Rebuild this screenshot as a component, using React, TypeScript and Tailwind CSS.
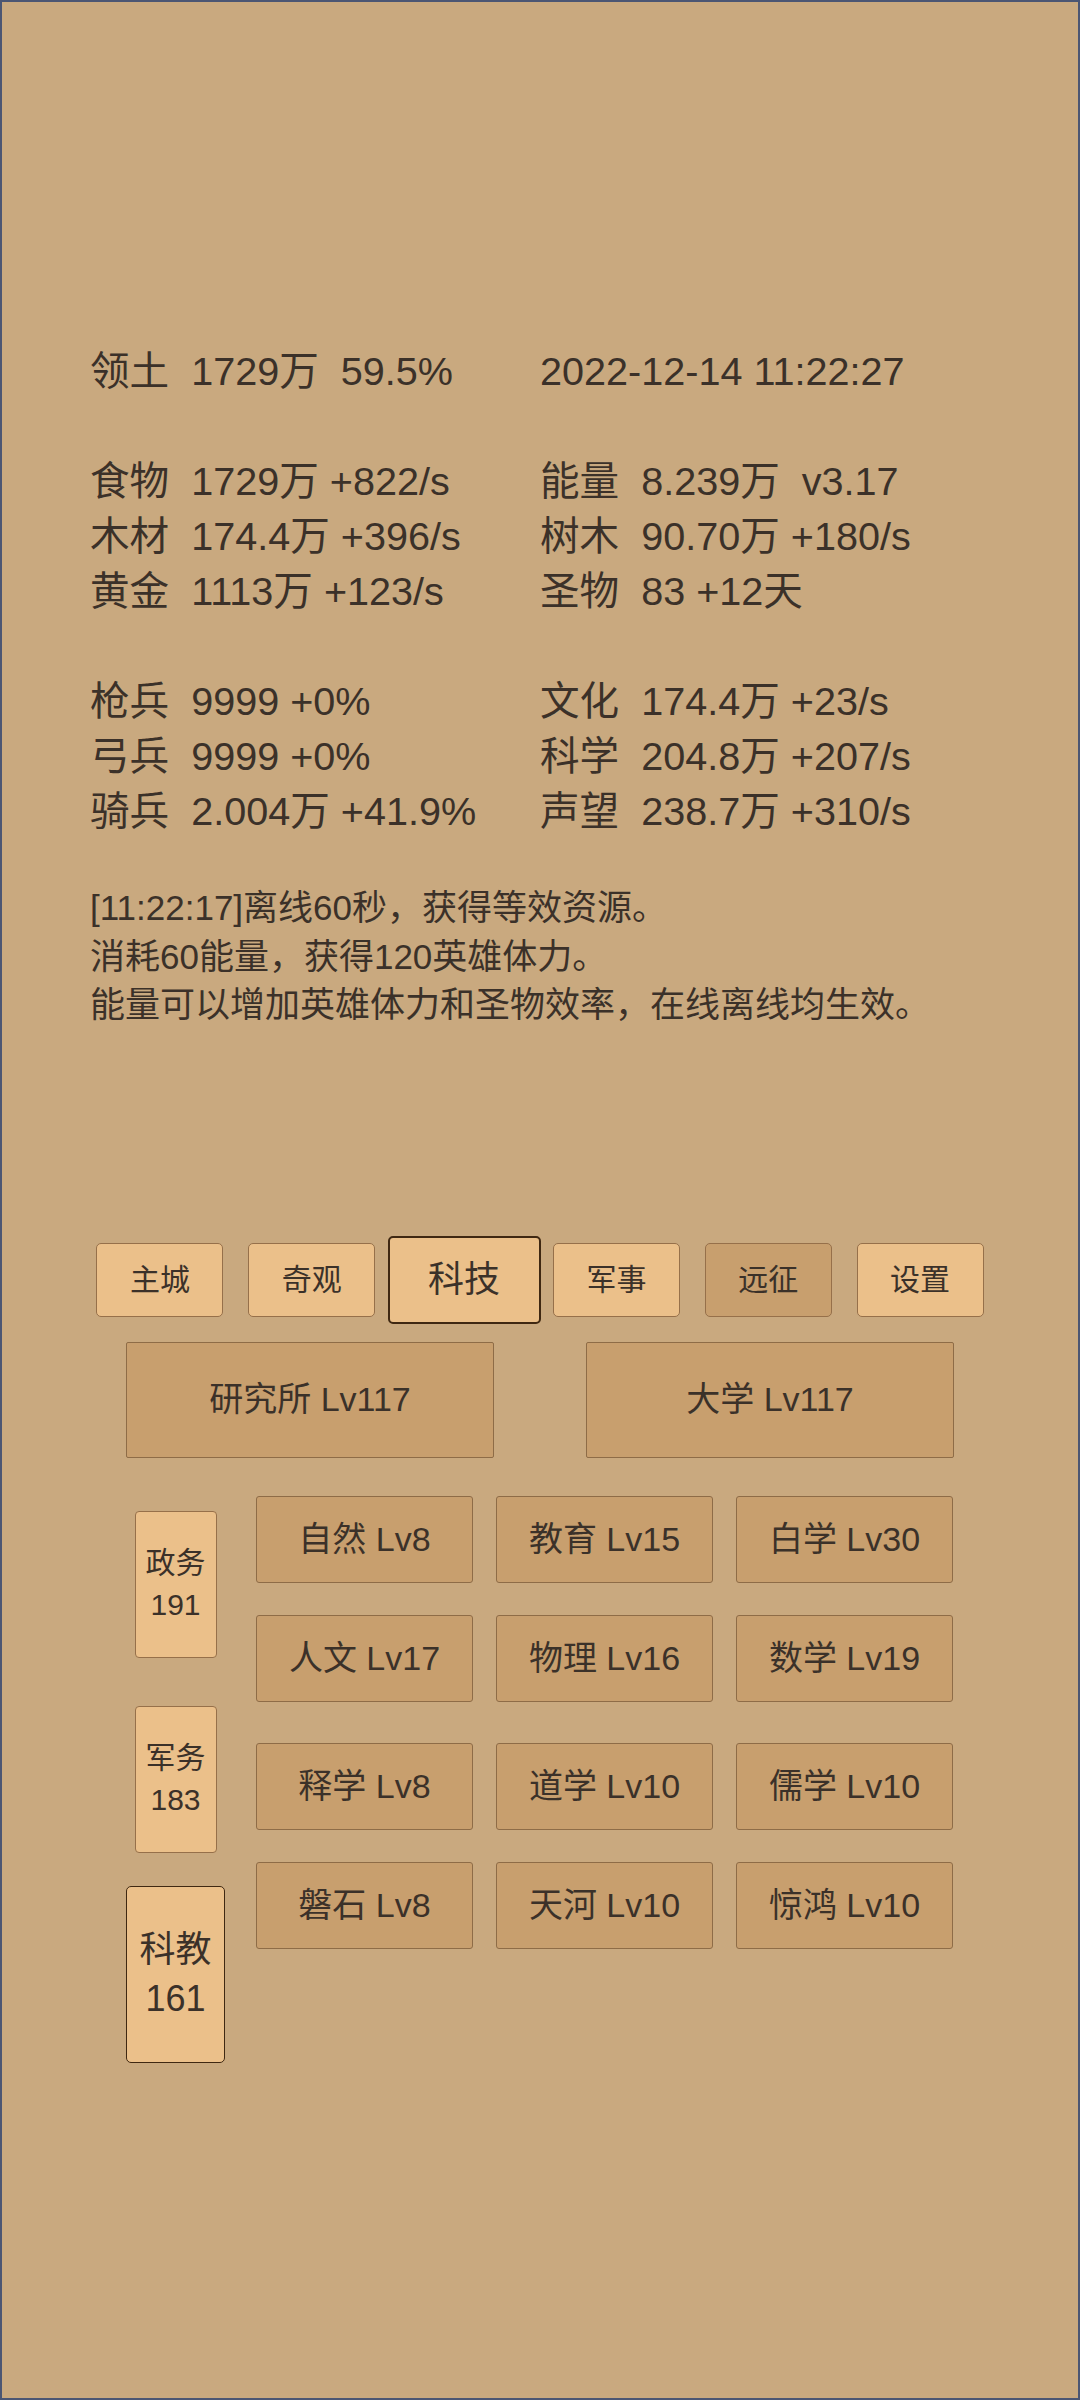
import React from 'react';

const STATS: [string, string][] = [
  ['领土  1729万  59.5%', '2022-12-14 11:22:27'],
  ['', ''],
  ['食物  1729万 +822/s', '能量  8.239万  v3.17'],
  ['木材  174.4万 +396/s', '树木  90.70万 +180/s'],
  ['黄金  1113万 +123/s', '圣物  83 +12天'],
  ['', ''],
  ['枪兵  9999 +0%', '文化  174.4万 +23/s'],
  ['弓兵  9999 +0%', '科学  204.8万 +207/s'],
  ['骑兵  2.004万 +41.9%', '声望  238.7万 +310/s'],
];

const LOGS = [
  '[11:22:17]离线60秒，获得等效资源。',
  '消耗60能量，获得120英雄体力。',
  '能量可以增加英雄体力和圣物效率，在线离线均生效。',
];

const TABS = [
  { name: '主城' },
  { name: '奇观' },
  { name: '科技', active: true },
  { name: '军事' },
  { name: '远征', dim: true },
  { name: '设置' },
];

const TECH_ROWS = [
  ['自然 Lv8', '教育 Lv15', '白学 Lv30'],
  ['人文 Lv17', '物理 Lv16', '数学 Lv19'],
  ['释学 Lv8', '道学 Lv10', '儒学 Lv10'],
  ['磐石 Lv8', '天河 Lv10', '惊鸿 Lv10'],
];

const TechCell: React.FC<{ label: string }> = ({ label }) => (
  <div className="w-[217px] h-[87px] flex items-center justify-center bg-[#c89f6e] border border-[#8e6c47] rounded-[3px] text-[34px]">
    {label}
  </div>
);

export default function App() {
  return (
    <div
      className="w-[1080px] h-[2400px] bg-[#c9a97f] border-2 border-[#4b5673] text-[#3b3129] overflow-hidden"
      style={{ fontFamily: '"Liberation Sans", "Noto Sans CJK SC", sans-serif' }}
    >
      {/* stats */}
      <div className="mt-[342px] px-[88px]">
        {STATS.map(([l, r], i) => (
          <div key={i} className="grid grid-cols-2 h-[55px] leading-[55px] text-[39.6px] whitespace-pre">
            <div>{l}</div>
            <div>{r}</div>
          </div>
        ))}
      </div>

      {/* log */}
      <div className="mt-[45px] px-[88px] text-[35px] leading-[48.5px]">
        {LOGS.map((t, i) => (
          <div key={i}>{t}</div>
        ))}
      </div>

      {/* tabs */}
      <div className="mt-[206px] mx-auto w-[912px] h-[88px] flex">
        {TABS.map((t) => (
          <div key={t.name} className="flex-1 flex items-center justify-center">
            {t.active ? (
              <div className="w-[153px] h-[88px] flex items-center justify-center bg-[#ebc08a] border-2 border-[#3f2812] rounded-[5px] text-[36px]">
                {t.name}
              </div>
            ) : (
              <div
                className={`w-[127px] h-[74px] flex items-center justify-center border border-[#96704a] rounded-[5px] text-[30px] ${t.dim ? 'bg-[#c89f6e]' : 'bg-[#ebc08a]'}`}
              >
                {t.name}
              </div>
            )}
          </div>
        ))}
      </div>

      {/* buildings */}
      <div className="mt-[18px] mx-auto w-[828px] flex justify-between">
        <div className="w-[368px] h-[116px] flex items-center justify-center bg-[#c89f6e] border border-[#8e6c47] rounded-[2px] text-[34px]">
          研究所 Lv117
        </div>
        <div className="w-[368px] h-[116px] flex items-center justify-center bg-[#c89f6e] border border-[#8e6c47] rounded-[2px] text-[34px]">
          大学 Lv117
        </div>
      </div>

      {/* tech tree */}
      <div className="mt-[38px] mx-auto w-[828px] flex gap-[31px]">
        <div className="w-[99px] flex flex-col items-center">
          <div className="mt-[15px] w-[82px] h-[147px] flex flex-col items-center justify-center bg-[#ebc08a] border border-[#96704a] rounded-[4px] text-[30px] leading-[42px]">
            <span>政务</span>
            <span>191</span>
          </div>
          <div className="mt-[48px] w-[82px] h-[147px] flex flex-col items-center justify-center bg-[#ebc08a] border border-[#96704a] rounded-[4px] text-[30px] leading-[42px]">
            <span>军务</span>
            <span>183</span>
          </div>
          <div className="mt-[33px] w-[99px] h-[177px] flex flex-col items-center justify-center bg-[#ebc08a] border-[1.5px] border-[#3f2812] rounded-[5px] text-[36px] leading-[49px]">
            <span>科教</span>
            <span>161</span>
          </div>
        </div>
        <div className="flex flex-col">
          {TECH_ROWS.map((row, i) => (
            <div
              key={i}
              className={`flex gap-[23px] ${i === 1 || i === 3 ? 'mt-[32px]' : i === 2 ? 'mt-[41px]' : ''}`}
            >
              {row.map((c) => (
                <TechCell key={c} label={c} />
              ))}
            </div>
          ))}
        </div>
      </div>
    </div>
  );
}
